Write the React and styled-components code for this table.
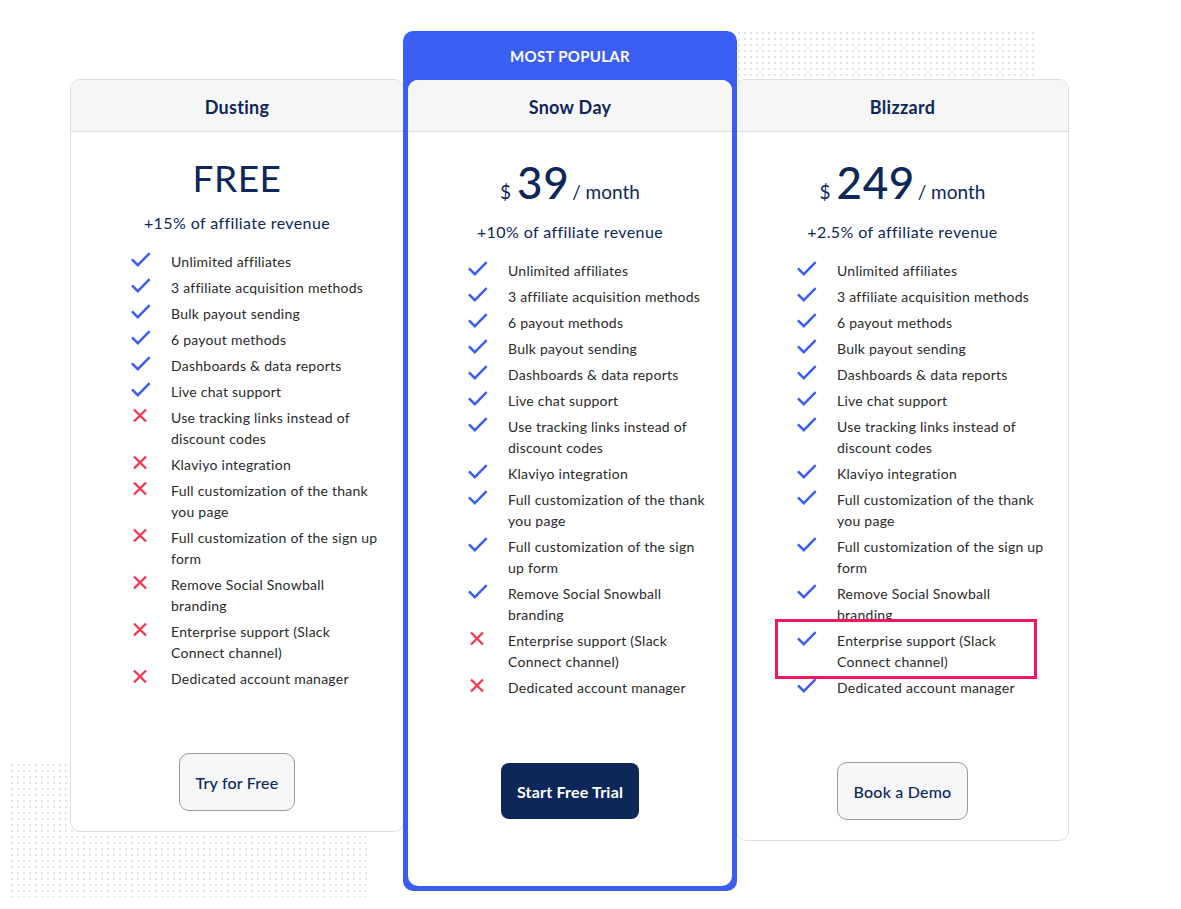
import React from 'react'
import styled, { createGlobalStyle, css } from 'styled-components'

const GlobalStyle = createGlobalStyle`
	html, body {margin: 0; padding: 0; background: #fff;}
	body {font-family: 'Lato', 'Liberation Sans', sans-serif; color: #0d2759;}
	* {box-sizing: border-box;}
`

const NAVY = '#0d2759'
const BLUE = '#3a5ef2'

const yes = (t) => ({ text: t, ok: true })
const no = (t) => ({ text: t, ok: false })

const plans = [
	{
		name: 'Dusting', free: true, revenue: '+15% of affiliate revenue', cta: 'Try for Free',
		features: [
			yes('Unlimited affiliates'), yes('3 affiliate acquisition methods'), yes('Bulk payout sending'),
			yes('6 payout methods'), yes('Dashboards & data reports'), yes('Live chat support'),
			no('Use tracking links instead of discount codes'), no('Klaviyo integration'),
			no('Full customization of the thank you page'), no('Full customization of the sign up form'),
			no('Remove Social Snowball branding'), no('Enterprise support (Slack Connect channel)'),
			no('Dedicated account manager'),
		],
	},
	{
		name: 'Snow Day', price: '39', revenue: '+10% of affiliate revenue', cta: 'Start Free Trial', popular: true,
		features: [
			yes('Unlimited affiliates'), yes('3 affiliate acquisition methods'), yes('6 payout methods'),
			yes('Bulk payout sending'), yes('Dashboards & data reports'), yes('Live chat support'),
			yes('Use tracking links instead of discount codes'), yes('Klaviyo integration'),
			yes('Full customization of the thank you page'), yes('Full customization of the sign up form'),
			yes('Remove Social Snowball branding'), no('Enterprise support (Slack Connect channel)'),
			no('Dedicated account manager'),
		],
	},
	{
		name: 'Blizzard', price: '249', revenue: '+2.5% of affiliate revenue', cta: 'Book a Demo',
		features: [
			yes('Unlimited affiliates'), yes('3 affiliate acquisition methods'), yes('6 payout methods'),
			yes('Bulk payout sending'), yes('Dashboards & data reports'), yes('Live chat support'),
			yes('Use tracking links instead of discount codes'), yes('Klaviyo integration'),
			yes('Full customization of the thank you page'), yes('Full customization of the sign up form'),
			yes('Remove Social Snowball branding'), { text: 'Enterprise support (Slack Connect channel)', ok: true, mark: true },
			yes('Dedicated account manager'),
		],
	},
]

const CheckIcon = () => (
	<svg width="20" height="16" viewBox="0 0 20 16" fill="none">
		<path d="M1.8 8.2 L6.8 13.2 L17.8 2" stroke={BLUE} strokeWidth="2.4" strokeLinecap="square" />
	</svg>
)

const CrossIcon = () => (
	<svg width="20" height="16" viewBox="0 0 20 16" fill="none">
		<path d="M3 1.5 L15 13.5 M15 1.5 L3 13.5" stroke="#ef3a4e" strokeWidth="2.3" />
	</svg>
)

function Plan({ plan }) {
	return (
		<>
			<CardHead>{plan.name}</CardHead>
			<CardBody $popular={plan.popular}>
				{plan.free ? (
					<FreePrice>FREE</FreePrice>
				) : (
					<Price>
						<span className="cur">$</span>
						<span className="num">{plan.price}</span>
						<span className="per">/ month</span>
					</Price>
				)}
				<Revenue>{plan.revenue}</Revenue>
				<FeatureList>
					{plan.features.map((f) => (
						<Feature key={f.text} $mark={f.mark}>
							<IconBox>{f.ok ? <CheckIcon /> : <CrossIcon />}</IconBox>
							<span>{f.text}</span>
						</Feature>
					))}
				</FeatureList>
				<Button $primary={plan.popular}>{plan.cta}</Button>
			</CardBody>
		</>
	)
}

export default function App() {
	return (
		<>
			<GlobalStyle />
			<Page>
				<Dots $top={31} $left={737} $w={298} $h={90} />
				<Dots $top={763} $left={10} $w={358} $h={134} />
				<Row>
					<SideCard><Plan plan={plans[0]} /></SideCard>
					<PopularCard>
						<Badge>MOST POPULAR</Badge>
						<Inner><Plan plan={plans[1]} /></Inner>
					</PopularCard>
					<SideCard><Plan plan={plans[2]} /></SideCard>
				</Row>
			</Page>
		</>
	)
}

const Page = styled.div`
	position: relative; width: 1181px; min-height: 909px; padding: 31px 0 0 70px;
`
const Dots = styled.div`
	position: absolute; z-index: 0; top: ${p => p.$top}px; left: ${p => p.$left}px; width: ${p => p.$w}px; height: ${p => p.$h}px;
	background-image: radial-gradient(circle at 2px 2px, #e3e3e3 1.1px, transparent 1.5px);
	background-size: 6px 6px;
`
const Row = styled.div`
	position: relative; z-index: 1; display: flex; align-items: flex-start;
`
const SideCard = styled.div`
	width: 334px; margin-top: 48px; background: #fff; border: 1px solid #dedede; border-radius: 10px; overflow: hidden;
	&:last-child {margin-left: -1px; width: 333px;}
`
const PopularCard = styled.div`
	position: relative; z-index: 2; width: 334px; margin-left: -1px; background: ${BLUE}; border-radius: 10px; padding: 0 5px 5px;
`
const Badge = styled.div`
	height: 49px; display: flex; align-items: center; justify-content: center; color: #fff; font-size: 15px; font-weight: 700; letter-spacing: 0.3px;
`
const Inner = styled.div`
	background: #fff; border-radius: 10px; overflow: hidden;
`
const CardHead = styled.div`
	height: 52px; display: flex; align-items: center; justify-content: center; background: #f6f6f6; border-bottom: 1px solid #dedede;
	font-size: 18px; font-weight: 700; color: ${NAVY}; padding-top: 3px; letter-spacing: 0.3px;
`
const CardBody = styled.div`
	display: flex; flex-direction: column; align-items: center; padding: 22px 0 ${p => p.$popular ? 67 : 20}px;
`
const FreePrice = styled.div`
	height: 48px; line-height: 48px; font-size: 37px; font-weight: 400; color: ${NAVY}; letter-spacing: 0.5px;
`
const Price = styled.div`
	height: 57px; display: flex; align-items: baseline; justify-content: center; color: ${NAVY}; padding-top: 2px;
	.cur {font-size: 19px; margin-right: 6px;}
	.num {font-size: 44px; line-height: 52px; font-weight: 500; letter-spacing: 0.5px;}
	.per {font-size: 19px; margin-left: 3px;}
`
const Revenue = styled.div`
	margin-top: 10px; height: 22px; line-height: 22px; font-size: 16px; color: ${NAVY}; letter-spacing: 0.4px;
`
const FeatureList = styled.ul`
	list-style: none; margin: 17px 0 0; padding: 0 23px 0 60px; width: 100%;
	display: flex; flex-direction: column; gap: 5px;
`
const Feature = styled.li`
	position: relative; display: flex; align-items: flex-start; gap: 20px; font-size: 14px; line-height: 21px; color: #2a2a2a; letter-spacing: 0.25px;
	span {flex: 1;}
	${p => p.$mark && css`
		&::after {content: ''; position: absolute; top: -11px; bottom: -7px; left: -22px; right: 8px; border: 3px solid #f2165c; pointer-events: none;}
	`}
`
const IconBox = styled.div`
	flex: none; width: 20px; height: 16px; margin-top: 1px; display: flex;
`
const Button = styled.a`
	margin-top: ${p => p.$primary ? 65 : 64}px; display: flex; align-items: center; justify-content: center; cursor: pointer;
	font-size: 16px; border-radius: 10px; letter-spacing: 0.2px;
	${p => p.$primary ? css`
		height: 56px; padding: 0 16px; background: ${NAVY}; color: #fff; font-weight: 700; border-radius: 8px;
	` : css`
		height: 58px; padding: 0 16px; background: #f6f7f9; color: ${NAVY}; border: 1px solid #9a9a9a; font-weight: 500;
	`}
`
